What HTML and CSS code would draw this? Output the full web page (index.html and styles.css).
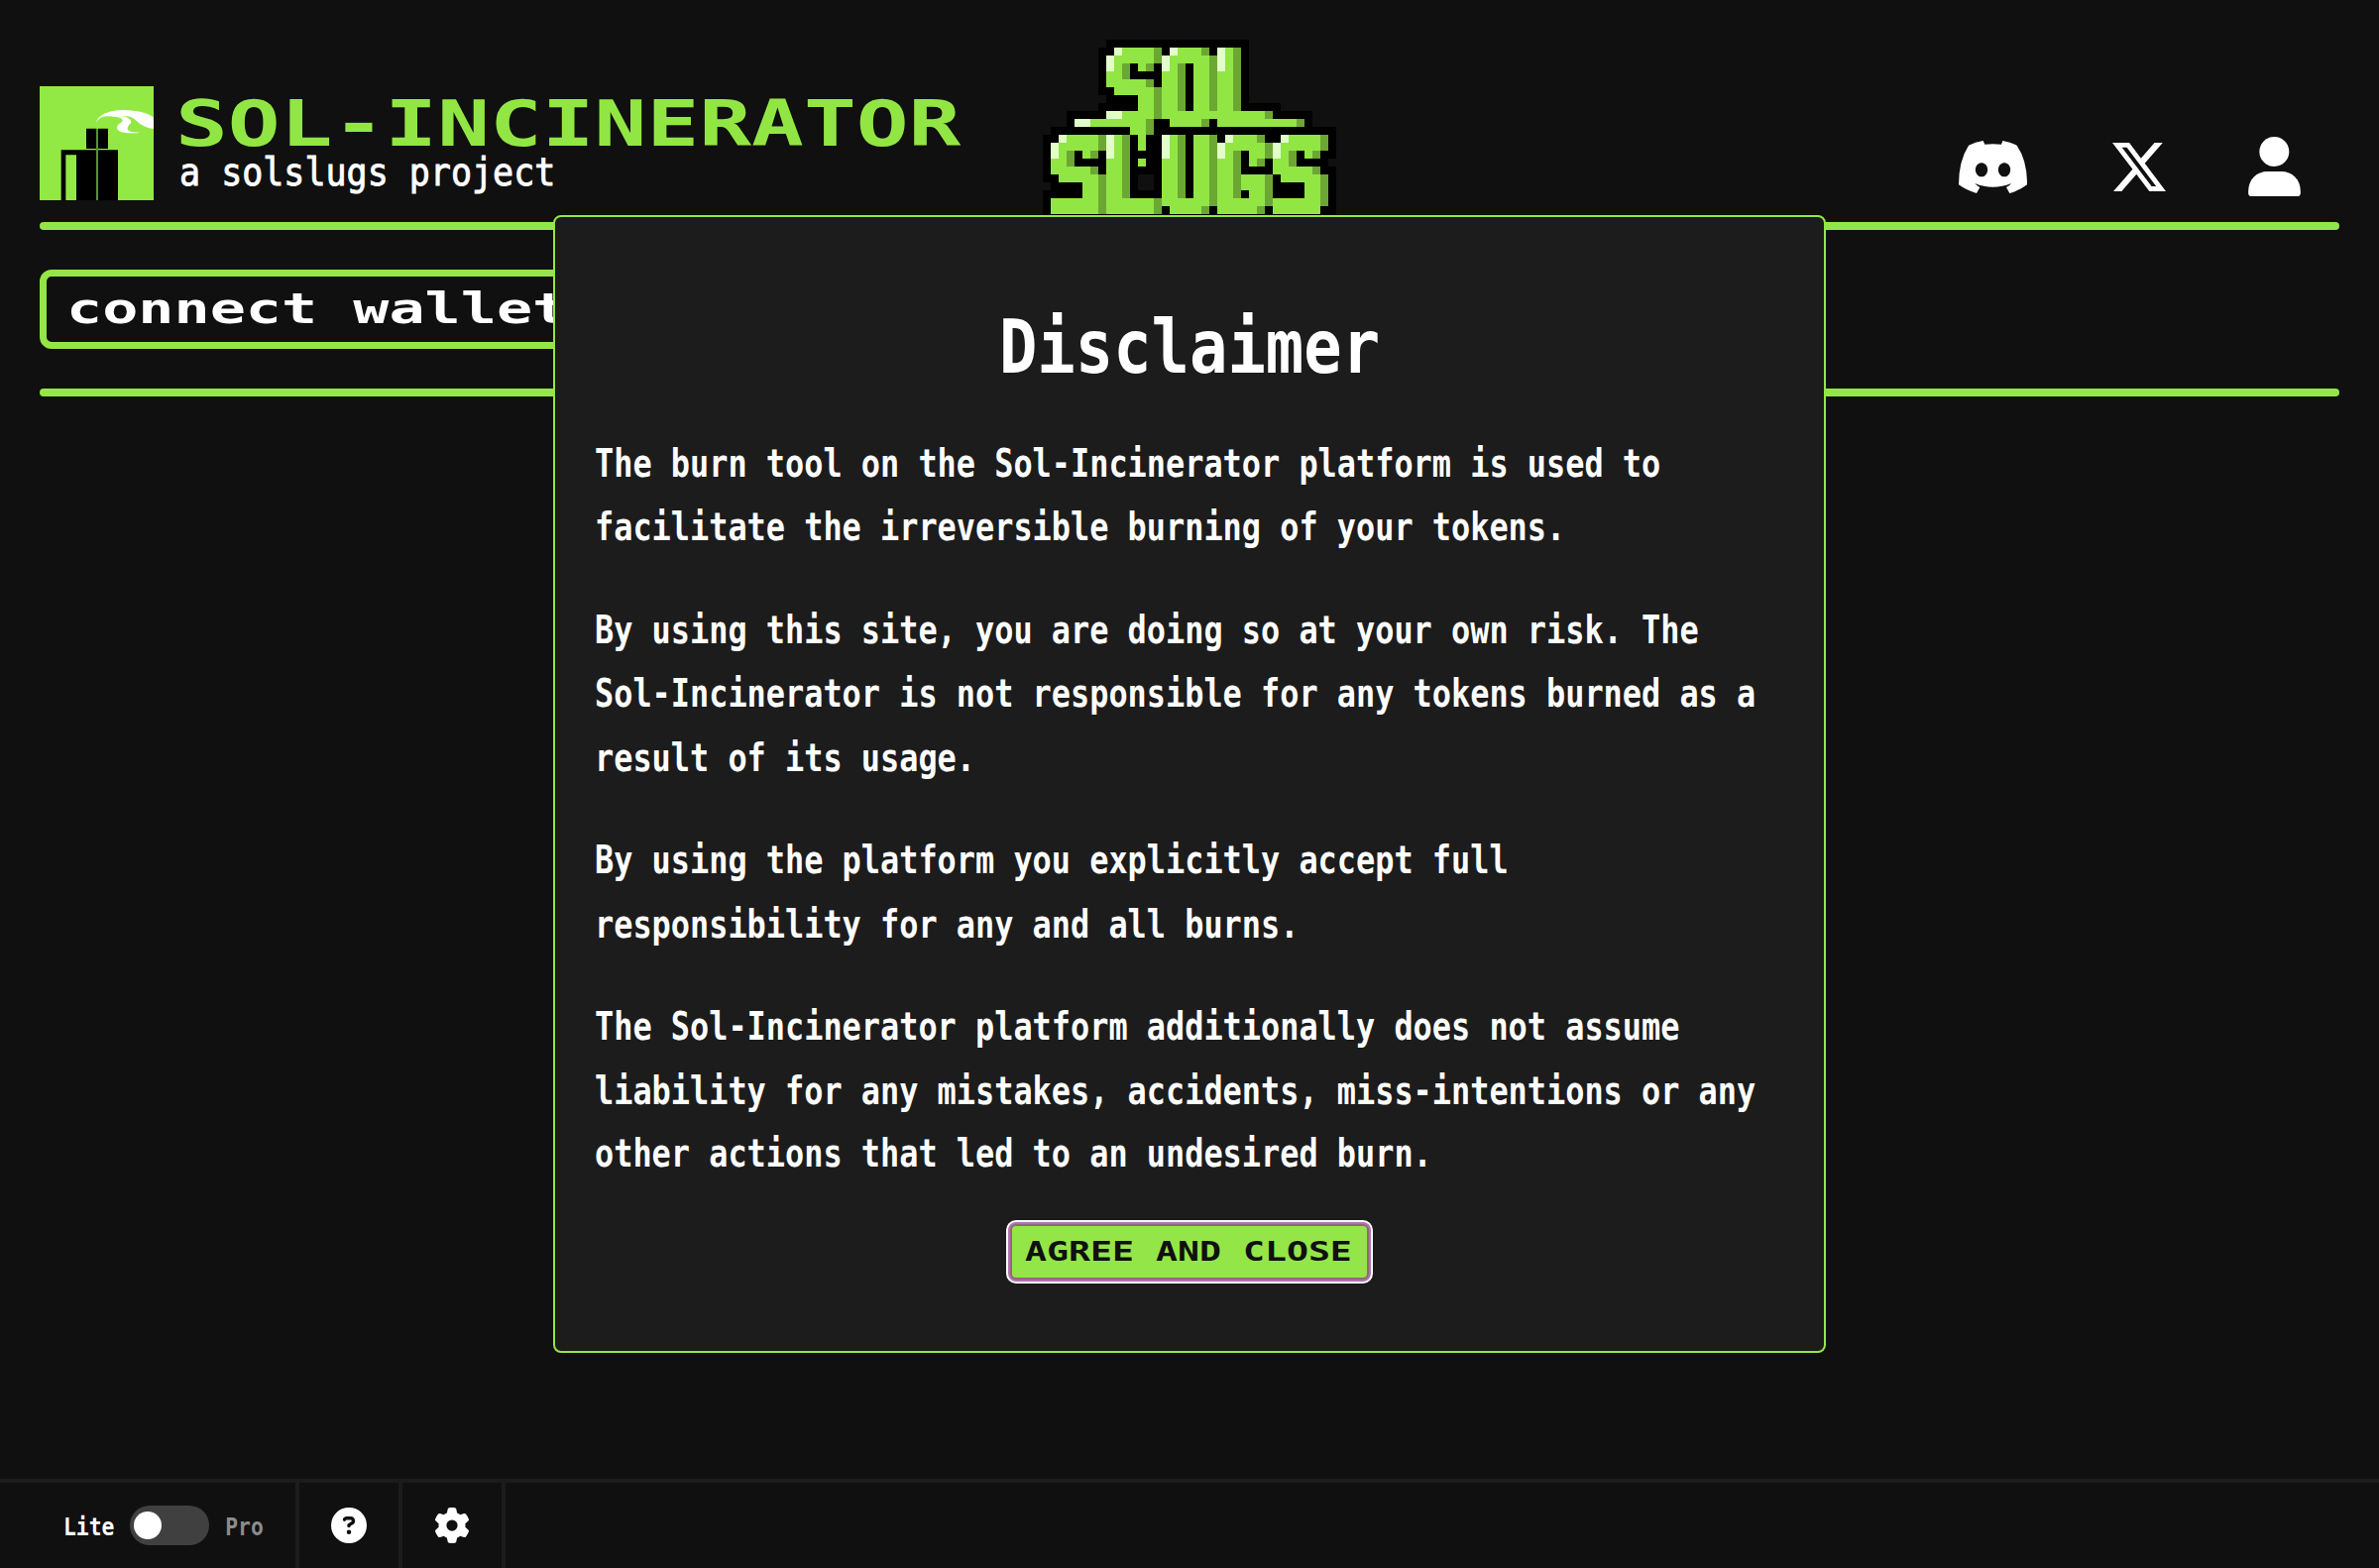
FILE: index.html
```html
<!DOCTYPE html>
<html lang="en">
<head>
<meta charset="utf-8">
<title>Sol-Incinerator</title>
<link rel="stylesheet" href="styles.css">
</head>
<body>
<div class="page">
  <header class="header">
    <div class="brand">
      <svg class="brand-mark" viewBox="0 0 345 345" preserveAspectRatio="none">
        <path fill="#93e944" d="M0 0h345v345H0z"/>
        <path d="M141 128h30v61h-30zM177 128h30v61h-30zM65 193h106v152h-60V208H79v137H65zM177 193h60v152h-60z"/>
        <path fill="#599126" d="M171 128h6v217h-6z"/>
        <path fill="#fff" d="M172 110C174 90 205 72 255 72C295 73 325 80 345 94V129C320 127 300 112 290 102C280 92 268 89 250 90C268 93 280 102 276 112C262 124 262 135 278 138C285 140 295 139 304 140C285 144 250 142 238 134C230 124 236 116 248 109C256 102 248 95 230 93C215 90 198 90 190 93C180 97 176 102 172 110Z"/>
      </svg>
      <div class="brand-text">
        <div class="brand-name">SOL-INCINERATOR</div>
        <div class="brand-sub">a solslugs project</div>
      </div>
    </div>
    <svg class="slugs" id="slugs" viewBox="0 0 37 23" shape-rendering="crispEdges"></svg>
    <nav class="social">
      <svg class="discord" viewBox="108 94 207 159"><path fill="#fff" fill-rule="evenodd" d="M182 94L187 105Q211 102 237 105L241 94Q265 98 284 108Q316 155 315 227Q292 245 262 253L252 235Q262 231 267 223Q211 246 157 223Q163 231 172 235L162 253Q131 244 108 227Q108 155 138 108Q158 97 182 94ZM177 161a18.5 21 0 1 0 .1 0ZM246 161a18.5 21 0 1 0 .1 0Z"/></svg>
      <svg class="x" viewBox="1.25 2.25 21.58 19.5"><path fill="#fff" d="M18.244 2.25h3.308l-7.227 8.26 8.502 11.24H16.17l-5.214-6.817L4.99 21.75H1.68l7.73-8.835L1.254 2.25H8.08l4.713 6.231zm-1.161 17.52h1.833L7.084 4.126H5.117z"/></svg>
      <svg class="user" viewBox="984 84 158 180"><circle cx="1062.500" cy="129" r="45" fill="#fff"/><path fill="#fff" d="M984 250C984 212 1010 189 1042 189H1084C1116 189 1142 212 1142 250V254Q1142 264 1132 264H994Q984 264 984 254Z"/></svg>
    </nav>
  </header>
  <div class="rule"></div>
  <section class="wallet-bar">
    <button class="connect"><span class="connect-label">connect wallet</span></button>
  </section>
  <div class="rule"></div>
  <main class="content"></main>
  <footer class="footer">
    <div class="cell mode">
      <span class="mode-label">Lite</span>
      <span class="toggle"><span class="knob"></span></span>
      <span class="mode-label off">Pro</span>
    </div>
    <div class="cell"><svg class="icon" viewBox="0 0 512 512"><path fill="#fff" fill-rule="evenodd" d="M256 512A256 256 0 1 0 256 0a256 256 0 1 0 0 512zM169.800 165.300c7.900-22.300 29.100-37.300 52.800-37.300h58.300c34.900 0 63.100 28.300 63.100 63.100c0 22.600-12.100 43.500-31.700 54.800L280 264.400c-.2 13-10.900 23.600-24 23.600c-13.300 0-24-10.700-24-24V250.500c0-8.600 4.600-16.500 12.100-20.800l44.300-25.400c4.700-2.700 7.600-7.700 7.600-13.100c0-8.400-6.800-15.100-15.100-15.100H222.600c-3.400 0-6.400 2.100-7.500 5.300l-.4 1.200c-4.400 12.500-18.200 19-30.600 14.600s-19-18.200-14.600-30.600l.4-1.200zM224 352a32 32 0 1 1 64 0 32 32 0 1 1 -64 0z"/></svg></div>
    <div class="cell"><svg class="icon" viewBox="0 0 512 512"><path fill="#fff" fill-rule="evenodd" d="M495.900 166.600c3.200 8.700 .5 18.400-6.400 24.600l-43.300 39.400c1.100 8.300 1.700 16.800 1.700 25.400s-.6 17.100-1.700 25.400l43.300 39.400c6.900 6.200 9.600 15.900 6.400 24.600c-4.400 11.900-9.700 23.300-15.800 34.300l-4.700 8.100c-6.600 11-14 21.400-22.100 31.200c-5.900 7.200-15.700 9.600-24.500 6.800l-55.700-17.700c-13.400 10.300-28.200 18.900-44 25.400l-12.500 57.100c-2 9.100-9 16.300-18.200 17.800c-13.800 2.300-28 3.500-42.500 3.500s-28.700-1.200-42.500-3.500c-9.200-1.500-16.200-8.700-18.200-17.800l-12.500-57.100c-15.800-6.500-30.600-15.100-44-25.400L83.100 425.900c-8.800 2.800-18.600 .3-24.500-6.800c-8.100-9.800-15.500-20.200-22.100-31.200l-4.700-8.100c-6.100-11-11.400-22.400-15.800-34.300c-3.200-8.700-.5-18.400 6.400-24.600l43.300-39.400C64.600 273.100 64 264.600 64 256s.6-17.100 1.700-25.400L22.400 191.200c-6.900-6.200-9.600-15.900-6.400-24.600c4.400-11.900 9.700-23.300 15.800-34.300l4.700-8.100c6.600-11 14-21.400 22.100-31.200c5.900-7.200 15.700-9.600 24.500-6.800l55.700 17.700c13.400-10.300 28.200-18.900 44-25.400l12.500-57.100c2-9.100 9-16.300 18.200-17.800C227.300 1.200 241.500 0 256 0s28.700 1.200 42.500 3.500c9.200 1.500 16.200 8.700 18.200 17.800l12.500 57.100c15.800 6.500 30.600 15.100 44 25.400l55.700-17.700c8.800-2.800 18.600-.3 24.500 6.800c8.100 9.800 15.500 20.200 22.100 31.200l4.700 8.100c6.100 11 11.400 22.400 15.800 34.300zM256 336a80 80 0 1 0 0-160 80 80 0 1 0 0 160z"/></svg></div>
  </footer>
</div>
<div class="modal" role="dialog">
  <h1 class="modal-title">Disclaimer</h1>
  <div class="modal-body">
    <div class="modal-copy">
      <p>The burn tool on the Sol-Incinerator platform is used to<br>facilitate the irreversible burning of your tokens.</p>
      <p>By using this site, you are doing so at your own risk. The<br>Sol-Incinerator is not responsible for any tokens burned as a<br>result of its usage.</p>
      <p>By using the platform you explicitly accept full<br>responsibility for any and all burns.</p>
      <p>The Sol-Incinerator platform additionally does not assume<br>liability for any mistakes, accidents, miss-intentions or any<br>other actions that led to an undesired burn.</p>
    </div>
  </div>
  <button class="agree"><span class="agree-label">AGREE AND CLOSE</span></button>
</div>
<script src="slugs.js"></script>
</body>
</html>
```
FILE: slugs.js
```js
// Pixel rows of the Sol Slugs logo: colour letter, first column, end column (exclusive).
const colours = { k: "#000", b: "#101010", g: "#92e644", d: "#6ca733", w: "#e2ffc9" };
const ol = "g15-17 d17 g19-21 d21 g22-24 d24";
const rows = [
  "k8-26",
  "k7-26 w9 g10-14 d14 w16 g17-20 d20 w22 g23 d24",
  "k7-26 w8 g9-14 d14 w15 g16-21 d21 w22 g23 d24",
  "k7-26 w8 g9 d10 g12 d13 w15 g16 d17 g19-21 d21 w22 g23 d24",
  "k7-26 g8-10 d10 " + ol,
  "k7-26 g8-13 d13 " + ol,
  "k7-26 g9-14 d14 " + ol,
  "k8-26 g12-14 d14 " + ol,
  "k7-30 g12-14 d14 " + ol,
  "k3-34 w8-10 g10-14 d14 g15-28 d28",
  "k3-34 w4-6 g6-13 d13 g16-20 d20 g22-32 d32",
  "k1-37 g11-13 d13",
  "k0-37 w2 g3-7 d7 w8 g9 d10 g12 w15 g16 d17 g19-21 d21 w23 g24-27 d27 w30 g31-35 d35",
  "k0-37 w1 g2-7 d7 w8 g9 d10 g12 w15 g16 d17 g19-21 d21 w22 g23-28 d28 w29 g30-35 d35",
  "k0-37 w1 g2 d3 g5 d6 w8 g9 d10 w15 g16 d17 g19-21 d21 w22 g23 d24 g26-28 d28 w29 g30 d31 g33 d34",
  "k0-36 g1-3 d3 g8-10 d10 g12 " + ol + " g26 d27 g29-31 d31",
  "k0-37 g1-6 d6 g8-10 d10 " + ol + " g29-34 d34",
  "k0-37 g2-7 d7 g8-10 d10 b12-14 " + ol + " g25-28 d28 g30-35 d35",
  "k1-37 g5-7 d7 g8-10 d10 b12-14 " + ol + " g25-28 d28 g33-35 d35",
  "k0-37 g5-7 d7 g8-10 d10 " + ol + " g26-28 d28 g33-35 d35",
  "k0-37 g1-7 d7 g8-14 d14 g15-21 d21 g22-28 d28 g29-35 d35",
  "k0-37 g1-7 d7 g8-14 d14 g16-20 d20 g22-27 d27 g29-35",
  "k0-37"
];
const logo = document.getElementById("slugs");
rows.forEach((row, y) => {
  for (const span of row.split(" ")) {
    const [start, end] = span.slice(1).split("-").map(Number);
    const rect = document.createElementNS("http://www.w3.org/2000/svg", "rect");
    rect.setAttribute("x", start);
    rect.setAttribute("y", y);
    rect.setAttribute("width", (end || start + 1) - start);
    rect.setAttribute("height", 1);
    rect.setAttribute("fill", colours[span[0]]);
    logo.appendChild(rect);
  }
});
```
FILE: styles.css
```css
* { box-sizing: border-box; }
body {
  margin: 0;
  background: #101010;
  color: #fff;
  font-family: "DejaVu Sans Mono", monospace;
  overflow: hidden;
}
svg { display: block; flex: none; }
button { font: inherit; cursor: pointer; }

.page { height: 1582px; display: flex; flex-direction: column; }

.header {
  height: 224px;
  padding: 0 40px;
  display: grid;
  grid-template-columns: 1012px 296px 1fr;
  align-items: start;
}
.brand { display: flex; gap: 22px; padding-top: 86.5px; }
.brand-mark { width: 115px; height: 115px; }
.brand-text { padding-top: 8px; white-space: nowrap; }
.brand-name {
  color: #92e644;
  font-size: 64px;
  font-weight: 700;
  line-height: 60px;
  transform: scaleX(1.371);
  transform-origin: 0 0;
}
.brand-sub {
  margin: -1px 0 0 4px;
  font-size: 35px;
  line-height: 40px;
  -webkit-text-stroke: 0.8px #fff;
  transform: scaleY(1.11);
}
.slugs { width: 296px; height: 184px; margin-top: 40px; }
.social {
  display: flex;
  align-items: center;
  justify-content: flex-end;
  height: 60px;
  margin-top: 138px;
  padding-right: 39px;
}
.discord { width: 69px; height: 53px; }
.x { width: 54px; height: 49px; margin: 0 83px 0 86px; }
.user { width: 53px; height: 60px; }

.rule { flex: none; height: 8px; margin: 0 40px; border-radius: 4px; background: #94e648; }

.wallet-bar { height: 160px; padding: 40px; }
.connect {
  display: block;
  width: 566px;
  height: 80px;
  padding: 0 20px;
  border: 7px solid #94e648;
  border-radius: 12px;
  background: #101010;
  color: #fff;
  text-align: left;
}
.connect-label {
  display: block;
  font-size: 42px;
  font-weight: 700;
  line-height: 60px;
  white-space: nowrap;
  transform: scaleX(1.43);
  transform-origin: 0 0;
}
.content { flex: 1; }

.footer { height: 90px; display: flex; border-top: 4px solid #1c1c1c; }
.cell {
  width: 104px;
  display: flex;
  align-items: center;
  justify-content: center;
  border-right: 4px solid #1c1c1c;
}
.mode { width: 302px; padding-left: 64px; justify-content: flex-start; gap: 16px; }
.mode-label { font-size: 21.3px; font-weight: 700; transform: scaleY(1.2); }
.off { color: #8c8c8c; }
.toggle { width: 80px; height: 40px; padding: 6px 4px; border-radius: 20px; background: #404040; }
.knob { display: block; width: 28px; height: 28px; border-radius: 50%; background: #fff; }
.icon { width: 36px; height: 36px; }

.modal {
  position: absolute;
  left: 558px;
  top: 217px;
  width: 1284px;
  height: 1148px;
  padding: 83px 40px 0;
  border: 2px solid #94e648;
  border-radius: 8px;
  background: #1c1c1c;
  display: flex;
  flex-direction: column;
  align-items: center;
}
.modal-title {
  margin: 0;
  font-size: 63.8px;
  font-weight: 700;
  line-height: 96px;
  transform: scaleY(1.176);
}
.modal-body { width: 100%; height: 759px; margin-top: 39px; }
.modal-copy {
  display: flex;
  flex-direction: column;
  gap: 33.333px;
  font-size: 31.9px;
  font-weight: 700;
  line-height: 53.333px;
  white-space: nowrap;
  transform: scaleY(1.2);
  transform-origin: 0 0;
}
.modal-copy p { margin: 0; }
.agree {
  width: 370px;
  height: 64px;
  margin-top: 35px;
  padding: 0 2px 0 0;
  border: 2px solid #fff;
  border-radius: 10px;
  background: #94e648;
  color: #101010;
  box-shadow: inset 0 0 0 2px #b272b4, inset 0 0 0 4px #94667a;
}
.agree-label {
  display: block;
  font-size: 27.4px;
  font-weight: 700;
  line-height: 56px;
  white-space: nowrap;
  transform: scaleX(1.333);
}
```
